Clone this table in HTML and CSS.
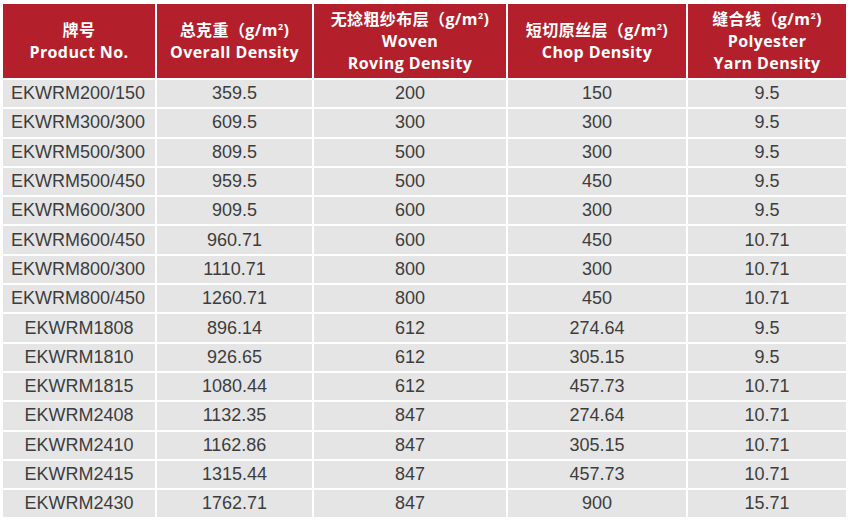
FILE: index.html
```html
<!DOCTYPE html>
<html lang="zh">
<head>
<meta charset="utf-8">
<title>Product Density</title>
<link rel="stylesheet" href="styles.css">
</head>
<body>
<table class="spec">
  <colgroup>
    <col class="c1"><col class="c2"><col class="c3"><col class="c4"><col class="c5">
  </colgroup>
  <thead>
    <tr>
      <th>牌号<br>Product No.</th>
      <th>总克重（g/m<sup>2</sup>)<br>Overall Density</th>
      <th>无捻粗纱布层（g/m<sup>2</sup>)<br>Woven<br>Roving Density</th>
      <th>短切原丝层（g/m<sup>2</sup>)<br>Chop Density</th>
      <th>缝合线（g/m<sup>2</sup>)<br>Polyester<br>Yarn Density</th>
    </tr>
  </thead>
  <tbody>
    <tr><td class="l">EKWRM200/150</td><td>359.5</td><td>200</td><td>150</td><td>9.5</td></tr>
    <tr><td class="l">EKWRM300/300</td><td>609.5</td><td>300</td><td>300</td><td>9.5</td></tr>
    <tr><td class="l">EKWRM500/300</td><td>809.5</td><td>500</td><td>300</td><td>9.5</td></tr>
    <tr><td class="l">EKWRM500/450</td><td>959.5</td><td>500</td><td>450</td><td>9.5</td></tr>
    <tr><td class="l">EKWRM600/300</td><td>909.5</td><td>600</td><td>300</td><td>9.5</td></tr>
    <tr><td class="l">EKWRM600/450</td><td>960.71</td><td>600</td><td>450</td><td>10.71</td></tr>
    <tr><td class="l">EKWRM800/300</td><td>1110.71</td><td>800</td><td>300</td><td>10.71</td></tr>
    <tr><td class="l">EKWRM800/450</td><td>1260.71</td><td>800</td><td>450</td><td>10.71</td></tr>
    <tr><td>EKWRM1808</td><td>896.14</td><td>612</td><td>274.64</td><td>9.5</td></tr>
    <tr><td>EKWRM1810</td><td>926.65</td><td>612</td><td>305.15</td><td>9.5</td></tr>
    <tr><td>EKWRM1815</td><td>1080.44</td><td>612</td><td>457.73</td><td>10.71</td></tr>
    <tr><td>EKWRM2408</td><td>1132.35</td><td>847</td><td>274.64</td><td>10.71</td></tr>
    <tr><td>EKWRM2410</td><td>1162.86</td><td>847</td><td>305.15</td><td>10.71</td></tr>
    <tr><td>EKWRM2415</td><td>1315.44</td><td>847</td><td>457.73</td><td>10.71</td></tr>
    <tr><td>EKWRM2430</td><td>1762.71</td><td>847</td><td>900</td><td>15.71</td></tr>
  </tbody>
</table>
</body>
</html>
```
FILE: styles.css
```css
html, body {
  margin: 0;
  padding: 0;
  background: #ffffff;
}
body {
  padding: 2px 0 0 1px;
}
.spec {
  border-collapse: separate;
  border-spacing: 2px;
  table-layout: fixed;
  width: 847px;
  font-family: "Liberation Sans", Arial, sans-serif;
}
.c1 { width: 152px; }
.c2 { width: 155px; }
.c3 { width: 192px; }
.c4 { width: 178px; }
.c5 { width: 158px; }
.spec th {
  background: #b3202b;
  color: #ffffff;
  height: 74px;
  padding: 0;
  font-family: "Open Sans", "Noto Sans CJK SC", sans-serif;
  font-weight: 700;
  font-size: 16px;
  line-height: 22px;
  letter-spacing: 0.4px;
  vertical-align: middle;
  text-align: center;
}
.spec th sup {
  font-size: 9px;
  line-height: 0;
  vertical-align: 6px;
}
.spec td {
  background: #e5e5e5;
  color: #3d3d3d;
  height: 27.3px;
  padding: 0;
  font-size: 18px;
  line-height: 27px;
  text-align: center;
}
.spec td.l {
  text-align: left;
  padding-left: 8px;
}
```
